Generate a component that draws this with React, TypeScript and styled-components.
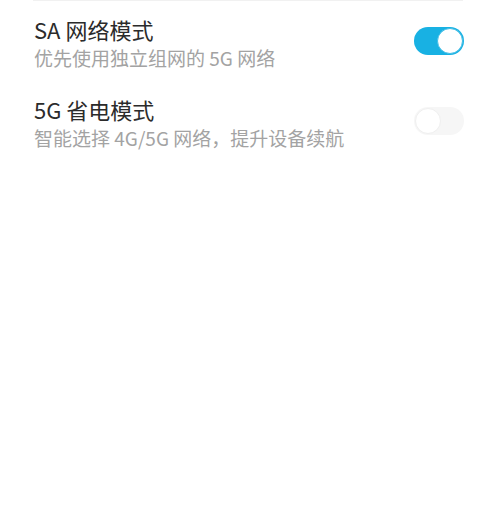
import React, { useState } from "react";
import styled, { createGlobalStyle } from "styled-components";

const GlobalStyle = createGlobalStyle`
  body {
    margin: 0;
    background: #ffffff;
    font-family: "Noto Sans CJK SC", "Noto Sans", sans-serif;
  }
`;

const List = styled.div`
  width: 500px;
  height: 522px;
  background: #ffffff;
  box-sizing: border-box;
`;

const Divider = styled.div`
  height: 1px;
  margin: 0 37px 0 33px;
  background: #f1f1f1;
`;

const Row = styled.div`
  display: flex;
  align-items: flex-start;
  justify-content: space-between;
  padding: 13px 36px 9px 34px;
`;

const Texts = styled.div`
  display: flex;
  flex-direction: column;
`;

const Title = styled.div`
  font-size: 22px;
  line-height: 30px;
  color: #2b2b2b;
`;

const Subtitle = styled.div`
  font-size: 19px;
  line-height: 28px;
  color: #a3a3a3;
`;

const Track = styled.button<{ $on: boolean }>`
  position: relative;
  width: 50px;
  height: 28px;
  margin-top: 13px;
  padding: 0;
  border: none;
  border-radius: 14px;
  background: ${(p) => (p.$on ? "#18b1e3" : "#f6f6f6")};
  cursor: pointer;
  outline: none;
`;

const Knob = styled.span<{ $on: boolean }>`
  position: absolute;
  top: 1px;
  left: ${(p) => (p.$on ? "23px" : "1px")};
  width: 26px;
  height: 26px;
  box-sizing: border-box;
  border-radius: 50%;
  background: #ffffff;
  border: 1px solid ${(p) => (p.$on ? "#40bde6" : "#efefef")};
`;

type Setting = { title: string; desc: string; on: boolean };

const initial: Setting[] = [
  { title: "SA 网络模式", desc: "优先使用独立组网的 5G 网络", on: true },
  { title: "5G 省电模式", desc: "智能选择 4G/5G 网络，提升设备续航", on: false },
];

export default function App() {
  const [items, setItems] = useState(initial);

  const toggle = (i: number) =>
    setItems((prev) => prev.map((it, j) => (j === i ? { ...it, on: !it.on } : it)));

  return (
    <List>
      <GlobalStyle />
      <Divider />
      {items.map((it, i) => (
        <Row key={it.title}>
          <Texts>
            <Title>{it.title}</Title>
            <Subtitle>{it.desc}</Subtitle>
          </Texts>
          <Track $on={it.on} onClick={() => toggle(i)}>
            <Knob $on={it.on} />
          </Track>
        </Row>
      ))}
    </List>
  );
}
